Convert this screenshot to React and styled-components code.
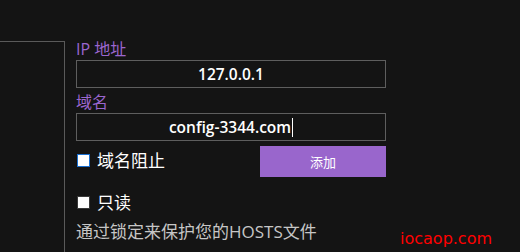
import React from "react";
import styled, { createGlobalStyle } from "styled-components";

const Global = createGlobalStyle`
  html, body { margin: 0; padding: 0; background: #141414; }
  body { font-family: "Open Sans", "Noto Sans CJK SC", sans-serif; }
`;

const Page = styled.div`
  position: relative;
  width: 520px;
  height: 252px;
  display: flex;
  overflow: hidden;
  background: #141414;
`;

const SidePanel = styled.div`
  margin-top: 41px;
  width: 64px;
  border-top: 1px solid #5a5a5a;
  border-right: 1px solid #5a5a5a;
`;

const Form = styled.div`
  margin-left: 11px;
  padding-top: 38px;
  width: 310px;
  display: flex;
  flex-direction: column;
`;

const Label = styled.div`
  font-family: "Open Sans", "Noto Sans CJK SC", sans-serif;
  font-size: 16px;
  line-height: 22px;
  height: 22px;
  color: #9a66cf;
  margin-top: ${(p) => p.$mt || 0}px;
`;

const Field = styled.div`
  height: 26px;
  border: 1px solid #5e5e5e;
  display: flex;
  align-items: center;
  justify-content: center;
  font-family: "Open Sans", "Noto Sans CJK SC", sans-serif;
  font-size: 15.5px;
  font-weight: 600;
  color: #ffffff;
`;

const Caret = styled.span`
  display: inline-block;
  width: 1px;
  height: 19px;
  background: #ffffff;
  margin-left: 1px;
`;

const ActionRow = styled.div`
  display: flex;
  align-items: flex-start;
  justify-content: space-between;
  margin-top: 5px;
`;

const Check = styled.label`
  display: flex;
  align-items: center;
  gap: 7px;
  margin-top: ${(p) => p.$mt || 0}px;
  padding-left: 1px;
  font-family: "Noto Sans CJK SC", sans-serif;
  font-size: 17px;
  line-height: 22px;
  color: #ffffff;
`;

const Box = styled.span`
  width: 11px;
  height: 11px;
  background: #ffffff;
  border: 1px solid ${(p) => (p.$focus ? "#1a6fd0" : "#3a3a3a")};
`;

const Button = styled.div`
  width: 126px;
  height: 31px;
  background: #9966cc;
  color: #ffffff;
  display: flex;
  align-items: center;
  justify-content: center;
  font-family: "Noto Sans CJK SC", sans-serif;
  font-size: 13px;
`;

const Note = styled.div`
  margin-top: 8px;
  font-family: "Open Sans", "Noto Sans CJK SC", sans-serif;
  font-size: 17px;
  line-height: 22px;
  color: #c6c6c6;
  white-space: nowrap;
`;

const Watermark = styled.div`
  position: absolute;
  left: 400px;
  top: 229px;
  font-family: "DejaVu Sans", sans-serif;
  font-size: 16px;
  color: #ff0000;
`;

export default function App() {
  return (
    <Page>
      <Global />
      <SidePanel />
      <Form>
        <Label>IP 地址</Label>
        <Field>127.0.0.1</Field>
        <Label $mt={3}>域名</Label>
        <Field>
          config-3344.com
          <Caret />
        </Field>
        <ActionRow>
          <Check $mt={3}>
            <Box $focus />
            域名阻止
          </Check>
          <Button>添加</Button>
        </ActionRow>
        <Check $mt={14}>
          <Box />
          只读
        </Check>
        <Note>通过锁定来保护您的HOSTS文件</Note>
      </Form>
      <Watermark>iocaop.com</Watermark>
    </Page>
  );
}
